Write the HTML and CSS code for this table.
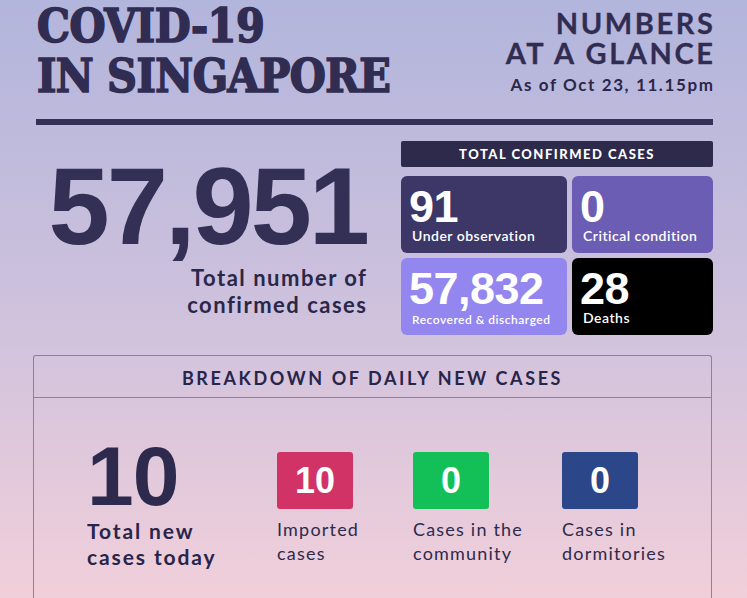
FILE: index.html
```html
<!DOCTYPE html>
<html lang="en">
<head>
<meta charset="utf-8">
<title>COVID-19 in Singapore</title>
<link rel="stylesheet" href="styles.css">
</head>
<body>
<div class="page">
  <header class="header">
    <h1 class="title">COVID-19<br>IN SINGAPORE</h1>
    <div class="glance">
      <div class="glance-title">NUMBERS<br>AT A GLANCE</div>
      <div class="asof">As of Oct 23, 11.15pm</div>
    </div>
  </header>
  <div class="rule"></div>

  <section class="main">
    <div class="total">
      <div class="total-num">57,951</div>
      <div class="total-label">Total number of<br>confirmed cases</div>
    </div>
    <div class="panel">
      <div class="panel-head">TOTAL CONFIRMED CASES</div>
      <div class="cards">
        <div class="card card-obs"><div class="card-num">91</div><div class="card-label">Under observation</div></div>
        <div class="card card-crit"><div class="card-num">0</div><div class="card-label">Critical condition</div></div>
        <div class="card card-rec"><div class="card-num">57,832</div><div class="card-label small">Recovered &amp; discharged</div></div>
        <div class="card card-death"><div class="card-num">28</div><div class="card-label">Deaths</div></div>
      </div>
    </div>
  </section>

  <section class="breakdown">
    <div class="bd-head">BREAKDOWN OF DAILY NEW CASES</div>
    <div class="bd-body">
      <div class="bd-total">
        <div class="bd-num">10</div>
        <div class="bd-total-label">Total new<br>cases today</div>
      </div>
      <div class="bd-item">
        <div class="chip chip-imp">10</div>
        <div class="chip-label">Imported<br>cases</div>
      </div>
      <div class="bd-item">
        <div class="chip chip-com">0</div>
        <div class="chip-label">Cases in the<br>community</div>
      </div>
      <div class="bd-item">
        <div class="chip chip-dorm">0</div>
        <div class="chip-label">Cases in<br>dormitories</div>
      </div>
    </div>
  </section>
</div>
</body>
</html>
```

FILE: styles.css
```css
html, body {
  margin: 0;
  padding: 0;
}
body {
  width: 747px;
  height: 598px;
  overflow: hidden;
  background: linear-gradient(to bottom, #b2b5dc 0%, #cdc1dd 50%, #f1cfda 100%);
  color: #2e2a4f;
  font-family: Lato, "Noto Sans", sans-serif;
}
.page {
  padding: 0 34px 0 33px;
}
.header {
  display: flex;
  justify-content: space-between;
  align-items: flex-start;
  padding-left: 4px;
}
.title {
  margin: 0;
  padding-top: 1px;
  font-family: "DejaVu Serif Condensed", "DejaVu Serif", serif;
  font-weight: 700;
  font-size: 46px;
  line-height: 50px;
  color: #312d52;
  -webkit-text-stroke: 1.6px #312d52;
  letter-spacing: -0.5px;
}
.glance {
  text-align: right;
  padding-top: 8px;
}
.glance-title {
  font-weight: 700;
  font-size: 29px;
  line-height: 30px;
  letter-spacing: 2.6px;
  margin-right: -2.6px;
  color: #312d52;
  -webkit-text-stroke: 0.3px #312d52;
}
.asof {
  font-weight: 700;
  font-size: 17px;
  letter-spacing: 1.6px;
  margin-top: 6px;
  margin-right: -1.5px;
  color: #2a2748;
}
.rule {
  height: 6px;
  background: #363058;
  margin: 18px 0 0 3px;
}
.main {
  display: flex;
  margin-top: 16px;
  gap: 35px;
}
.total {
  width: 330px;
  margin-left: 3px;
  text-align: right;
}
.total-num {
  font-family: "Liberation Sans", Arial, sans-serif;
  font-weight: 700;
  font-size: 110px;
  line-height: 90px;
  letter-spacing: -3px;
  margin-right: -1px;
  margin-top: 20px;
  color: #332f55;
}
.total-label {
  font-weight: 700;
  font-size: 22px;
  line-height: 27px;
  letter-spacing: 1.5px;
  margin-top: 13px;
  margin-right: -1.5px;
  color: #2a2748;
}
.panel {
  flex: 1;
}
.panel-head {
  height: 26px;
  line-height: 27px;
  background: #2e2a4c;
  color: #fff;
  text-align: center;
  font-weight: 900;
  font-size: 13px;
  letter-spacing: 1.5px;
  border-radius: 2px;
}
.cards {
  display: grid;
  grid-template-columns: 166px 1fr;
  grid-template-rows: 77px 77px;
  gap: 5px;
  margin-top: 9px;
}
.card {
  border-radius: 6px;
  color: #fff;
  padding: 13px 8px 0 8px;
  box-sizing: border-box;
}
.card-obs { background: #3d3767; }
.card-crit { background: #6b5db3; }
.card-rec { background: #9386ef; }
.card-death { background: #000; }
.card-num {
  font-family: "Liberation Sans", Arial, sans-serif;
  font-weight: 700;
  font-size: 45px;
  line-height: 36px;
  letter-spacing: -0.5px;
}
.card-label {
  font-weight: 600;
  font-size: 14px;
  line-height: 16px;
  letter-spacing: 0.5px;
  margin-top: 3px;
  padding-left: 3px;
}
.card-label.small {
  font-size: 12px;
  margin-top: 5px;
}
.breakdown {
  margin-top: 20px;
  margin-right: 1px;
  border: 1px solid #8e8298;
  border-bottom: none;
  border-radius: 3px 3px 0 0;
  height: 260px;
}
.bd-head {
  height: 41px;
  border-bottom: 1px solid #8e8298;
  text-align: center;
  font-weight: 700;
  font-size: 18px;
  line-height: 45px;
  letter-spacing: 2.6px;
  color: #27254a;
}
.bd-body {
  display: grid;
  grid-template-columns: 190px 136px 149px 1fr;
  padding: 46px 0 0 53px;
}
.bd-num {
  font-family: "Liberation Sans", Arial, sans-serif;
  font-weight: 700;
  font-size: 84px;
  line-height: 64px;
  letter-spacing: -1px;
  color: #2d2a4d;
}
.bd-total-label {
  font-weight: 700;
  font-size: 21px;
  line-height: 26px;
  letter-spacing: 1.9px;
  margin-top: 10px;
  color: #27254a;
}
.chip {
  width: 76px;
  height: 57px;
  margin-top: 8px;
  border-radius: 3px;
  color: #fff;
  text-align: center;
  font-family: "Liberation Sans", Arial, sans-serif;
  font-weight: 700;
  font-size: 36px;
  line-height: 58px;
}
.chip-imp { background: #d23366; }
.chip-com { background: #13bf57; }
.chip-dorm { background: #2b4689; }
.chip-label {
  font-size: 18px;
  line-height: 24px;
  letter-spacing: 1.2px;
  margin-top: 8px;
  color: #2d2a4d;
}
```
